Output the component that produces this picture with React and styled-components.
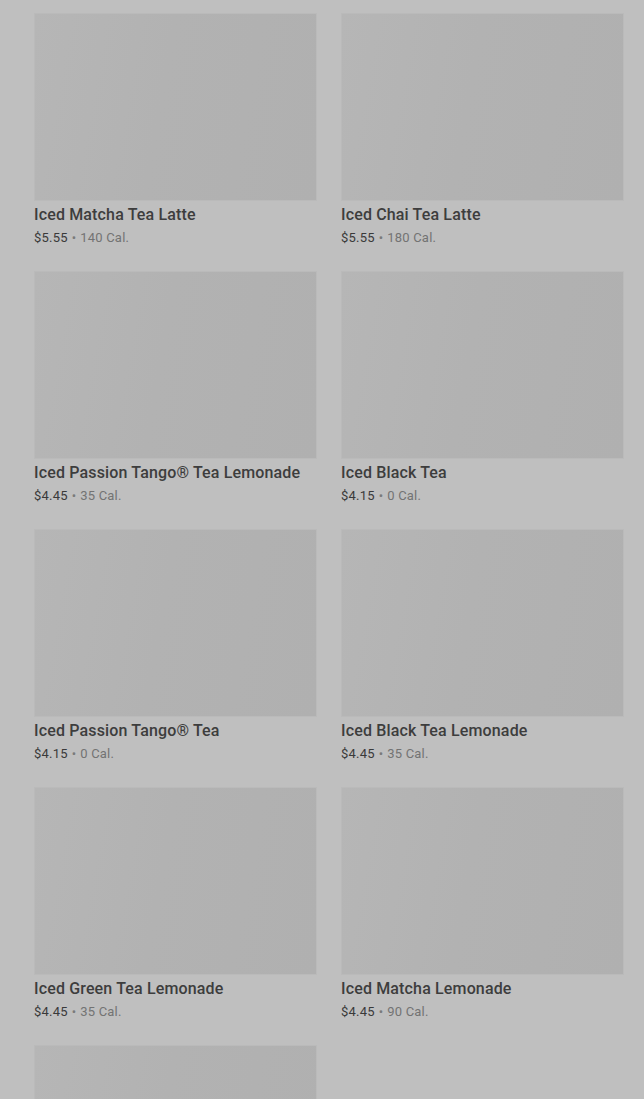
import React from "react";
import styled, { createGlobalStyle } from "styled-components";

const GlobalStyle = createGlobalStyle`
  html, body {
    margin: 0;
    padding: 0;
    background: #bfbfbf;
  }
  body {
    font-family: Roboto, "Liberation Sans", sans-serif;
    overflow: hidden;
  }
`;

const Page = styled.div`
  background: #bfbfbf;
  height: 1099px;
  overflow: hidden;
  padding: 13px 20px 0 34px;
  box-sizing: border-box;
`;

const Grid = styled.ul`
  display: grid;
  grid-template-columns: 283px 283px;
  column-gap: 24px;
  row-gap: 23px;
  list-style: none;
  margin: 0;
  padding: 0;
`;

const Card = styled.li`
  display: flex;
  flex-direction: column;
`;

const Thumb = styled.div`
  height: 188px;
  box-sizing: border-box;
  border: 1px solid #bababa;
  background: linear-gradient(100deg, #b6b6b6 0%, #b2b2b2 45%, #b0b0b0 100%);
`;

const Title = styled.h3`
  margin: 3px 0 0;
  font-size: 16px;
  line-height: 22px;
  font-weight: 500;
  color: #3d3d3d;
  letter-spacing: 0.15px;
`;

const Meta = styled.p`
  margin: 2px 0 0;
  font-size: 13px;
  line-height: 20px;
  color: #3a3a3a;
  letter-spacing: 0.2px;
`;

const Cal = styled.span`
  color: #737373;
`;

const Dot = styled.span`
  color: #7a7a7a;
  margin: 0 4px;
`;

const drinks = [
  { name: "Iced Matcha Tea Latte", price: "$5.55", cal: "140 Cal." },
  { name: "Iced Chai Tea Latte", price: "$5.55", cal: "180 Cal." },
  { name: "Iced Passion Tango® Tea Lemonade", price: "$4.45", cal: "35 Cal." },
  { name: "Iced Black Tea", price: "$4.15", cal: "0 Cal." },
  { name: "Iced Passion Tango® Tea", price: "$4.15", cal: "0 Cal." },
  { name: "Iced Black Tea Lemonade", price: "$4.45", cal: "35 Cal." },
  { name: "Iced Green Tea Lemonade", price: "$4.45", cal: "35 Cal." },
  { name: "Iced Matcha Lemonade", price: "$4.45", cal: "90 Cal." },
];

const App = () => {
  return (
    <Page>
      <GlobalStyle />
      <Grid>
        {drinks.map((d) => (
          <Card key={d.name}>
            <Thumb />
            <Title>{d.name}</Title>
            <Meta>
              {d.price}
              <Dot>•</Dot>
              <Cal>{d.cal}</Cal>
            </Meta>
          </Card>
        ))}
        {/* next row starts below the fold, only its picture shows */}
        <Card>
          <Thumb />
        </Card>
      </Grid>
    </Page>
  );
};

export default App;
